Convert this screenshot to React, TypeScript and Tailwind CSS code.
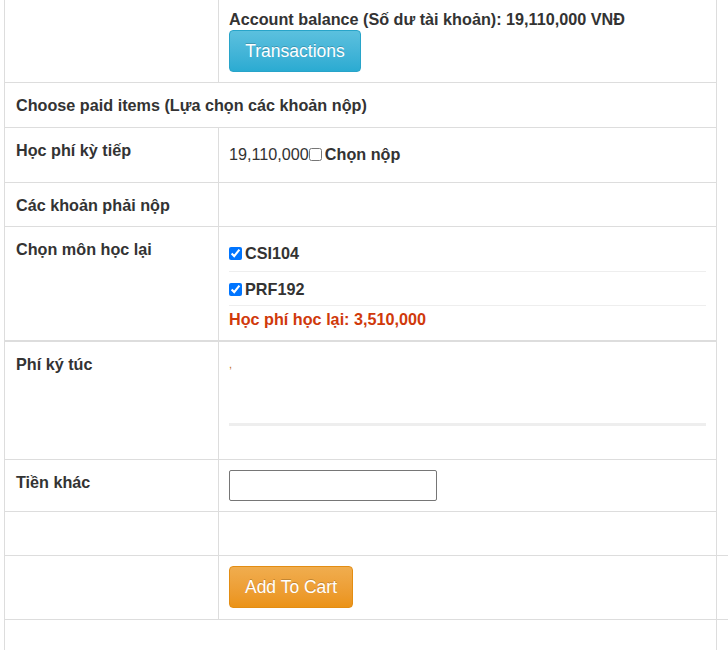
const cellLeft = "w-[214px] shrink-0 border-r border-[#ddd] pl-[11px] pr-[10px] font-bold";
const cellRight = "flex-1 min-w-0 pl-[10px] pr-[10px]";

function Checkbox({ checked }: { checked?: boolean }) {
  return <input type="checkbox" defaultChecked={checked} className="m-0 h-[13px] w-[13px] align-[-1px] mr-[3px]" />;
}

export default function App() {
  return (
    <div className="min-h-screen bg-white font-['Liberation_Sans',Arial,sans-serif] text-[16.2px] leading-[22px] text-[#333]">
      <div className="ml-[4px] w-[713px] min-h-[650px] border-x border-[#ddd]">
        {/* balance */}
        <div className="flex h-[83px] border-b border-[#ddd]">
          <div className={cellLeft} />
          <div className={`${cellRight} pt-[8px]`}>
            <div className="font-bold">Account balance (Số dư tài khoản): 19,110,000 VNĐ</div>
            <button className="h-[42px] w-[132px] rounded-[4px] border border-[#28a4c9] bg-gradient-to-b from-[#5bc0de] to-[#2aabd2] text-[17.5px] text-white [text-shadow:0_-1px_0_rgba(0,0,0,0.2)]">
              Transactions
            </button>
          </div>
        </div>

        <div className="flex h-[45px] border-b border-[#ddd] pl-[11px] pt-[11px] font-bold">
          Choose paid items (Lựa chọn các khoản nộp)
        </div>

        <div className="flex h-[55px] border-b border-[#ddd]">
          <div className={`${cellLeft} pt-[11px]`}>Học phí kỳ tiếp</div>
          <div className={`${cellRight} pt-[15px]`}>
            <span>19,110,000</span>
            <Checkbox />
            <span className="font-bold">Chọn nộp</span>
          </div>
        </div>

        <div className="flex h-[44px] border-b border-[#ddd]">
          <div className={`${cellLeft} pt-[11px]`}>Các khoản phải nộp</div>
          <div className={cellRight} />
        </div>

        <div className="flex h-[115px] border-b-2 border-[#ddd]">
          <div className={`${cellLeft} pt-[11px]`}>Chọn môn học lại</div>
          <div className={`${cellRight} pt-[15px]`}>
            <div className="border-b border-[#eee] pb-[7px] font-bold">
              <Checkbox checked />
              CSI104
            </div>
            <div className="border-b border-[#eee] pt-[6px] pb-[5px] font-bold">
              <Checkbox checked />
              PRF192
            </div>
            <div className="pt-[2px] font-bold text-[#d0390b]">Học phí học lại: 3,510,000</div>
          </div>
        </div>

        <div className="flex h-[118px] border-b border-[#ddd]">
          <div className={`${cellLeft} pt-[11px]`}>Phí ký túc</div>
          <div className={`${cellRight} pt-[11px]`}>
            <div className="text-[11px] leading-[22px] text-[#c0701a]">,</div>
            <div className="mt-[48px] h-[3px] bg-[#eee]" />
          </div>
        </div>

        <div className="flex h-[52px] border-b border-[#ddd]">
          <div className={`${cellLeft} pt-[11px]`}>Tiền khác</div>
          <div className={`${cellRight} pt-[10px]`}>
            <input type="text" className="block h-[31px] w-[208px] rounded-[2px] border border-[#767676] bg-white px-2 outline-none" />
          </div>
        </div>

        <div className="-mr-[12px] flex h-[44px] border-b border-[#ddd]">
          <div className={cellLeft} />
          <div className={cellRight} />
        </div>

        <div className="-mr-[12px] flex h-[64px] border-b border-[#ddd]">
          <div className={cellLeft} />
          <div className={`${cellRight} pt-[10px]`}>
            <button className="h-[42px] w-[124px] rounded-[4px] border border-[#e38d13] bg-gradient-to-b from-[#f0ad4e] to-[#eb9316] text-[17.5px] text-white [text-shadow:0_-1px_0_rgba(0,0,0,0.2)]">
              Add To Cart
            </button>
          </div>
        </div>
      </div>
    </div>
  );
}
